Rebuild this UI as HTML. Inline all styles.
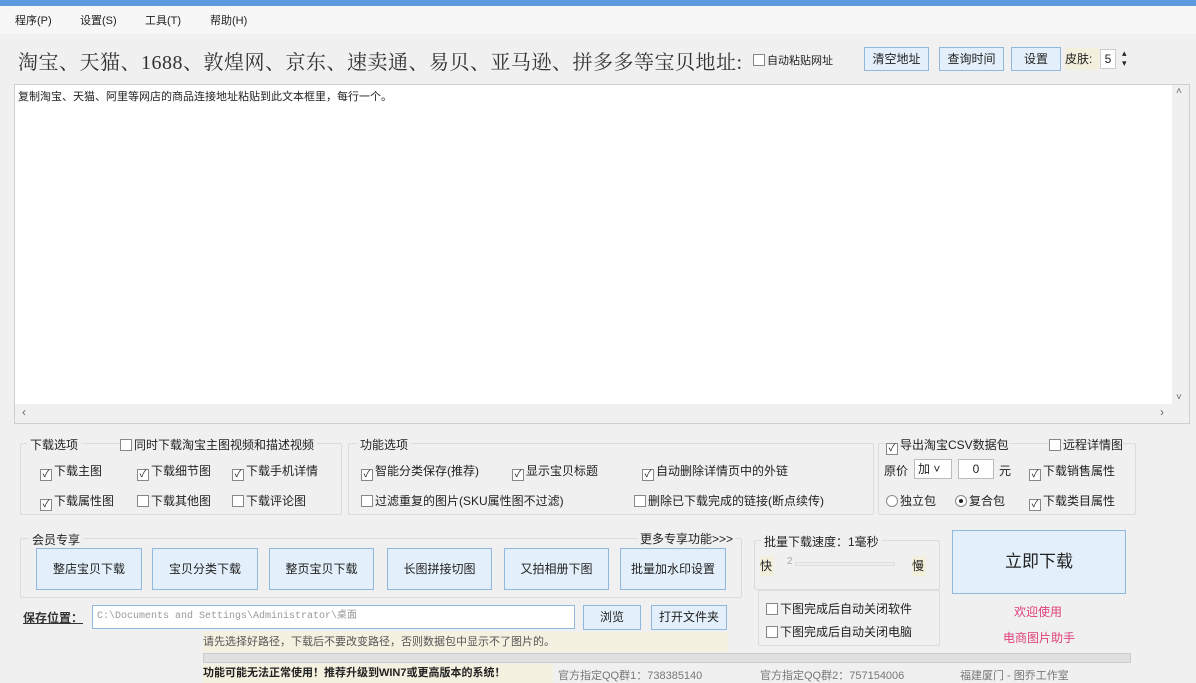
<!DOCTYPE html>
<html><head><meta charset="utf-8">
<style>
*{box-sizing:border-box;margin:0;padding:0}
body{width:1196px;height:683px;overflow:hidden;background:#f0f0f0;font-family:"Liberation Sans","Noto Sans CJK SC","WenQuanYi Zen Hei",sans-serif;font-size:12px;color:#222;position:relative}
.a{position:absolute;white-space:nowrap}
.cb{display:inline-block;width:12px;height:12px;border:1px solid #888;background:#fff;vertical-align:-2px;margin-right:2px;position:relative;font-size:10px;line-height:10px;text-align:center;color:#222}
.gb{position:absolute;border:1px solid #dcdcdc;border-radius:2px}
.gl{position:absolute;background:#f0f0f0;padding:0 3px;top:-8px;left:8px;font-size:12px}
.btn{position:absolute;background:#e3f0fb;border:1px solid #8fb8dc;text-align:center;font-size:12px;color:#222}
.rb{display:inline-block;width:12px;height:12px;border:1px solid #888;border-radius:50%;background:#fff;vertical-align:-2px;margin-right:2px;position:relative}
</style></head><body>
<div class="a" style="left:0;top:0;width:1196px;height:6px;background:#5d9ae0"></div>
<div class="a" style="left:0;top:6px;width:1196px;height:28px;background:#f7f7f7"></div>
<div class="a" style="left:15px;top:12px;font-size:11px">程序(P)</div>
<div class="a" style="left:80px;top:12px;font-size:11px">设置(S)</div>
<div class="a" style="left:145px;top:12px;font-size:11px">工具(T)</div>
<div class="a" style="left:210px;top:12px;font-size:11px">帮助(H)</div>
<div class="a" style="left:18px;top:46px;font-size:20px;color:#333;letter-spacing:0.5px;font-family:'Liberation Serif','Noto Serif CJK SC',serif">淘宝、天猫、1688、敦煌网、京东、速卖通、易贝、亚马逊、拼多多等宝贝地址:</div>
<div class="a" style="left:753px;top:52px;font-size:11px"><span class="cb"></span>自动粘贴网址</div>
<div class="btn" style="left:864px;top:47px;width:65px;height:24px;line-height:22px">清空地址</div>
<div class="btn" style="left:939px;top:47px;width:65px;height:24px;line-height:22px">查询时间</div>
<div class="btn" style="left:1011px;top:47px;width:50px;height:24px;line-height:22px">设置</div>
<div class="a" style="left:1065px;top:48px;width:34px;height:22px;background:#f2efdc;line-height:22px;font-size:12px">皮肤:</div>
<div class="a" style="left:1100px;top:49px;width:16px;height:20px;background:#fff;border:1px solid #ccc;line-height:18px;text-align:center">5</div>
<div class="a" style="left:1122px;top:48px;font-size:9px;line-height:10px">▴<br>▾</div>
<div class="a" style="left:14px;top:84px;width:1176px;height:340px;background:#fff;border:1px solid #cfcfcf"></div>
<div class="a" style="left:18px;top:88px;font-size:11px">复制淘宝、天猫、阿里等网店的商品连接地址粘贴到此文本框里，每行一个。</div>
<div class="a" style="left:15px;top:404px;width:1158px;height:19px;background:#f0f0f0"></div>
<div class="a" style="left:1172px;top:85px;width:17px;height:338px;background:#f0f0f0"></div>
<div class="a" style="left:22px;top:405px;font-size:12px;color:#666">‹</div>
<div class="a" style="left:1160px;top:405px;font-size:12px;color:#666">›</div>
<div class="a" style="left:1176px;top:86px;font-size:10px;color:#666">˄</div>
<div class="a" style="left:1176px;top:392px;font-size:10px;color:#666">˅</div>
<div class="gb" style="left:20px;top:443px;width:322px;height:72px"><div class="gl" style="left:6px">下载选项</div></div>
<div class="a" style="left:120px;top:436px;background:#f0f0f0;padding-right:3px"><span class="cb"></span>同时下载淘宝主图视频和描述视频</div>
<div class="a" style="left:40px;top:462px"><span class="cb">✓</span>下载主图</div>
<div class="a" style="left:137px;top:462px"><span class="cb">✓</span>下载细节图</div>
<div class="a" style="left:232px;top:462px"><span class="cb">✓</span>下载手机详情</div>
<div class="a" style="left:40px;top:492px"><span class="cb">✓</span>下载属性图</div>
<div class="a" style="left:137px;top:492px"><span class="cb"></span>下载其他图</div>
<div class="a" style="left:232px;top:492px"><span class="cb"></span>下载评论图</div>
<div class="gb" style="left:348px;top:443px;width:526px;height:72px"><div class="gl">功能选项</div></div>
<div class="a" style="left:361px;top:462px"><span class="cb">✓</span>智能分类保存(推荐)</div>
<div class="a" style="left:512px;top:462px"><span class="cb">✓</span>显示宝贝标题</div>
<div class="a" style="left:642px;top:462px"><span class="cb">✓</span>自动删除详情页中的外链</div>
<div class="a" style="left:361px;top:492px"><span class="cb"></span>过滤重复的图片(SKU属性图不过滤)</div>
<div class="a" style="left:634px;top:492px"><span class="cb"></span>删除已下载完成的链接(断点续传)</div>
<div class="gb" style="left:878px;top:443px;width:258px;height:72px"></div>
<div class="a" style="left:886px;top:436px;background:#f0f0f0"><span class="cb">✓</span>导出淘宝CSV数据包</div>
<div class="a" style="left:1049px;top:436px;background:#f0f0f0"><span class="cb"></span>远程详情图</div>
<div class="a" style="left:884px;top:462px">原价</div>
<div class="a" style="left:914px;top:459px;width:38px;height:20px;background:#fff;border:1px solid #bbb;line-height:18px;padding-left:3px">加 ˅</div>
<div class="a" style="left:958px;top:459px;width:36px;height:20px;background:#fff;border:1px solid #bbb;line-height:18px;text-align:center">0</div>
<div class="a" style="left:999px;top:462px">元</div>
<div class="a" style="left:1029px;top:462px"><span class="cb">✓</span>下载销售属性</div>
<div class="a" style="left:886px;top:492px"><span class="rb"></span>独立包</div>
<div class="a" style="left:955px;top:492px"><span class="rb"><span style="position:absolute;left:3px;top:3px;width:4px;height:4px;border-radius:50%;background:#222"></span></span>复合包</div>
<div class="a" style="left:1029px;top:492px"><span class="cb">✓</span>下载类目属性</div>
<div class="gb" style="left:20px;top:538px;width:722px;height:60px"><div class="gl">会员专享</div></div>
<div class="a" style="left:638px;top:530px;background:#f0f0f0;padding:0 2px">更多专享功能&gt;&gt;&gt;</div>
<div class="btn" style="left:36px;top:548px;width:106px;height:42px;line-height:40px">整店宝贝下载</div>
<div class="btn" style="left:152px;top:548px;width:106px;height:42px;line-height:40px">宝贝分类下载</div>
<div class="btn" style="left:269px;top:548px;width:105px;height:42px;line-height:40px">整页宝贝下载</div>
<div class="btn" style="left:387px;top:548px;width:105px;height:42px;line-height:40px">长图拼接切图</div>
<div class="btn" style="left:504px;top:548px;width:105px;height:42px;line-height:40px">又拍相册下图</div>
<div class="btn" style="left:620px;top:548px;width:106px;height:42px;line-height:40px">批量加水印设置</div>
<div class="gb" style="left:754px;top:540px;width:186px;height:50px"><div class="gl" style="left:6px">批量下载速度：1毫秒</div></div>
<div class="a" style="left:760px;top:556px;width:14px;height:20px;background:#f2efdc;line-height:20px">快</div>
<div class="a" style="left:787px;top:556px;font-size:10px;color:#aaa">2</div>
<div class="a" style="left:795px;top:562px;width:100px;height:4px;border:1px solid #ddd;background:#eee"></div>
<div class="a" style="left:912px;top:556px;width:14px;height:20px;background:#f2efdc;line-height:20px">慢</div>
<div class="gb" style="left:758px;top:590px;width:182px;height:56px"></div>
<div class="a" style="left:766px;top:600px"><span class="cb"></span>下图完成后自动关闭软件</div>
<div class="a" style="left:766px;top:623px"><span class="cb"></span>下图完成后自动关闭电脑</div>
<div class="btn" style="left:952px;top:530px;width:174px;height:64px;line-height:62px;font-size:17px">立即下载</div>
<div class="a" style="left:1014px;top:603px;color:#e0407a">欢迎使用</div>
<div class="a" style="left:1003px;top:629px;color:#e0407a">电商图片助手</div>
<div class="a" style="left:23px;top:609px;text-decoration:underline;font-weight:bold;color:#333">保存位置：</div>
<div class="a" style="left:92px;top:605px;width:483px;height:24px;background:#fff;border:1px solid #8fb8dc;line-height:22px;padding-left:4px;font-family:'Liberation Mono',monospace;font-size:10px;color:#999">C:\Documents and Settings\Administrator\桌面</div>
<div class="btn" style="left:583px;top:605px;width:58px;height:25px;line-height:23px">浏览</div>
<div class="btn" style="left:651px;top:605px;width:76px;height:25px;line-height:23px">打开文件夹</div>
<div class="a" style="left:203px;top:632px;width:525px;height:20px;background:#f5f1e1;line-height:20px;font-size:11px;color:#555">请先选择好路径，下载后不要改变路径，否则数据包中显示不了图片的。</div>
<div class="a" style="left:203px;top:653px;width:928px;height:10px;background:#e0e0e0;border:1px solid #ccc"></div>
<div class="a" style="left:203px;top:664px;width:350px;height:19px;background:#f5f1e1;line-height:19px;font-size:11px;font-weight:bold">功能可能无法正常使用！推荐升级到WIN7或更高版本的系统！</div>
<div class="a" style="left:558px;top:667px;font-size:11px;color:#777">官方指定QQ群1：738385140</div>
<div class="a" style="left:760px;top:667px;font-size:11px;color:#777">官方指定QQ群2：757154006</div>
<div class="a" style="left:960px;top:667px;font-size:11px;color:#777">福建厦门 - 图乔工作室</div>
</body></html>
